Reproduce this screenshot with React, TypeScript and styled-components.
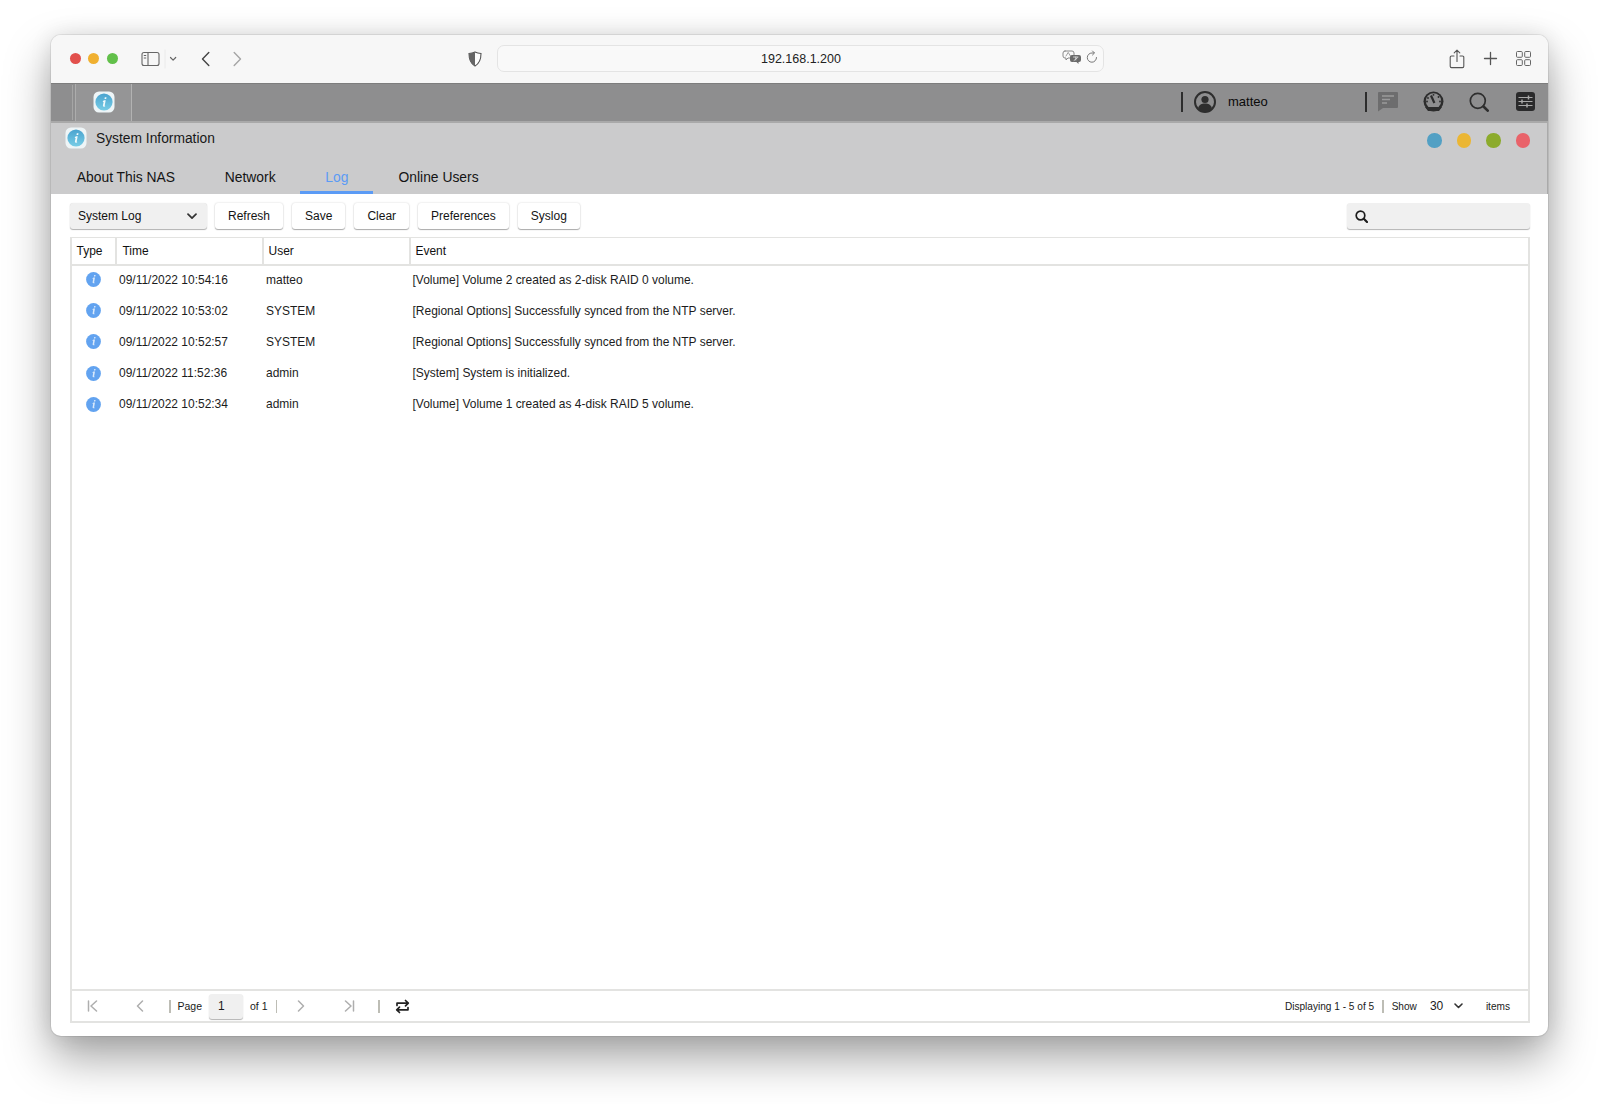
import React from "react";
import styled, { createGlobalStyle } from "styled-components";

const Global = createGlobalStyle`
  html, body { margin: 0; padding: 0; background: #fff; }
  body { font-family: "Liberation Sans", Arial, sans-serif; color: #111; }
`;
const Page = styled.div`
  width: 1600px; height: 1104px; padding: 35px 52px 68px 51px; box-sizing: border-box; overflow: hidden; background: #fff;
`;
const Win = styled.div`
  width: 100%; height: 100%; background: #fff; border-radius: 10px; display: flex; flex-direction: column; overflow: hidden;
  box-shadow: 0 0 0 1px rgba(0,0,0,.07), 0 22px 46px rgba(0,0,0,.36), 0 0 22px rgba(0,0,0,.1);
`;
const Safari = styled.div`
  height: 47px; flex: none; background: #f7f7f7; display: grid; grid-template-columns: 426.5px 607px 1fr; align-items: center; padding: 0 17px 1px 19px; border-bottom: 1px solid #7d7d7d;
`;
const SafariLeft = styled.div`display: flex; align-items: center;`;
const Lights = styled.div`display: flex; align-items: center; gap: 7.4px; margin-right: 23px;`;
const Light = styled.span`width: 11px; height: 11px; border-radius: 50%; background: ${p => p.$c};`;
const Nav = styled.div`display: flex; align-items: center; gap: 23px; margin-left: 22px;`;
const ShieldWrap = styled.div`display: flex; margin-left: auto; margin-right: 15px;`;
const UrlBar = styled.div`
  height: 24px; border: 1px solid #e4e4e4; border-radius: 7px; background: #f9f9f9; display: flex; align-items: center; justify-content: center; position: relative; font-size: 12.5px; color: #222; padding: 1px 0 0 2px;
`;
const UrlIcons = styled.div`position: absolute; right: 4px; top: 3px; display: flex; align-items: center; gap: 3px;`;
const SafariRight = styled.div`display: flex; align-items: center; justify-content: flex-end; gap: 18px;`;
const Tool = styled.span`display: flex;`;

const NasBar = styled.div`
  height: 39px; flex: none; background: #8e8e8f; display: flex; align-items: stretch; border-bottom: 2px solid #a9a9a9; box-sizing: border-box;
`;
const TaskTab = styled.div`
  width: 55px; margin-left: 24px; border-left: 1px solid #acacac; border-right: 1px solid #b2b2b2; background: #959596; box-shadow: -3px 0 0 -1px #8e8e8f, -4px 0 0 -1px #a5a5a5; display: flex; align-items: center; justify-content: center; padding-bottom: 2px;
`;
const NasUser = styled.div`margin-left: auto; display: flex; align-items: center; padding-bottom: 2px;`;
const Sep = styled.span`width: 2px; height: 20px; background: #2d2d2d;`;
const UserName = styled.span`font-size: 13px; color: #0a0a0a; width: 137px; margin-left: 12px;`;
const NasIcons = styled.div`display: flex; align-items: center; gap: 26px; margin-left: 11px; margin-right: 13px;`;

const Head = styled.div`background: #cbcbcc; height: 71px; flex: none; display: flex; flex-direction: column; border-right: 1px solid #aaa;`;
const TitleRow = styled.div`height: 33px; flex: none; display: flex; align-items: center; padding: 0 17px 3px 14px; box-sizing: border-box;`;
const Title = styled.span`font-size: 13.8px; margin-left: 9px; color: #181818;`;
const Dots = styled.div`margin-left: auto; display: flex; gap: 15px; margin-top: 5px;`;
const Dot = styled.span`width: 14.5px; height: 14.5px; border-radius: 50%; background: ${p => p.$c};`;
const Tabs = styled.div`display: flex; flex: 1; padding-left: 1px; margin-top: 6px;`;
const TabItem = styled.div<{ $active?: boolean; $ml?: number }>`
  padding: 0 24.85px; font-size: 13.85px; display: flex; align-items: center; margin-left: ${p => p.$ml ?? 0}px; color: ${p => p.$active ? "#5b9bf5" : "#141414"}; border-bottom: 3px solid ${p => p.$active ? "#5b9bf5" : "transparent"};
`;

const Content = styled.div`flex: 1; display: flex; flex-direction: column; padding: 9px 18px 13px 19px; min-height: 0;`;
const Toolbar = styled.div`height: 26px; flex: none; display: flex; gap: 7px; margin-bottom: 8px;`;
const Select = styled.div`
  width: 137px; background: #f0f0f0; border-radius: 3px; box-shadow: 0 1px 1px rgba(0,0,0,.3), 0 0 1px rgba(0,0,0,.12); font-size: 12px; display: flex; align-items: center; justify-content: space-between; padding: 0 10px 0 8px; box-sizing: border-box;
`;
const Btn = styled.div`
  background: #fff; padding: 0 13px; border-radius: 3px; box-shadow: 0 1px 1px rgba(0,0,0,.3), 0 0 2px rgba(0,0,0,.18); font-size: 12px; display: flex; align-items: center; color: #141414; margin-left: ${p => p.$ml ?? 0}px;
`;
const Search = styled.div`
  margin-left: auto; width: 183px; background: #f0f0f0; border-radius: 3px; box-shadow: 0 1px 1px rgba(0,0,0,.3); display: flex; align-items: center; padding-left: 8px; box-sizing: border-box;
`;
const Panel = styled.div`flex: 1; border: 2px solid #e3e3e1; border-width: 1.5px 2px 2px; display: flex; flex-direction: column; min-height: 0;`;
const Row = styled.div`
  display: grid; grid-template-columns: 43px 147px 147px 1fr; align-items: center; font-size: 11.97px; color: #1c1c1c;
`;
const HeaderRow = styled(Row)`height: 26px; flex: none; border-bottom: 2px solid #e3e3e1; box-sizing: content-box;`;
const HeadCell = styled.div`height: 100%; display: flex; align-items: center; padding-left: ${p => p.$pl ?? 4.5}px; border-left: ${p => p.$first ? "none" : "2px solid #e3e3e1"}; box-sizing: border-box; color: #111;`;
const Rows = styled.div`flex: 1; min-height: 0;`;
const DataRow = styled(Row)`height: 31.2px; padding-bottom: 4px; box-sizing: border-box;`;
const TypeCell = styled.div`display: flex; justify-content: center; padding-right: 1px;`;
const Cell = styled.div`padding-left: 3px; white-space: nowrap; margin-left: ${p => p.$ml ?? 0}px;`;
const Footer = styled.div`height: 30px; flex: none; border-top: 2px solid #e3e3e1; display: flex; align-items: center; font-size: 10.5px; color: #1a1a1a;`;
const PagerBtn = styled.span`display: flex; width: ${p => p.$w}px; justify-content: center;`;
const Bar = styled.span`width: 1.5px; height: 13px; background: #bdbdb5; margin-left: ${p => p.$ml ?? 0}px; margin-right: ${p => p.$mr ?? 0}px;`;
const Label = styled.span`margin-left: ${p => p.$ml ?? 0}px; white-space: nowrap;`;
const PageInput = styled.div`
  width: 34px; height: 25px; background: #f0f0f0; border-radius: 3px; box-shadow: 0 1px 1px rgba(0,0,0,.3); margin-left: 7px; margin-right: 7px; font-size: 12px; display: flex; align-items: center; padding-left: 9px; box-sizing: border-box;
`;
const FootRight = styled.div`margin-left: auto; display: flex; align-items: center; margin-right: 18px; font-size: 10.1px;`;
const Count = styled.span`font-size: 12px; margin-left: 13px; width: 33px; display: flex; align-items: center; justify-content: space-between;`;

const InfoApp = ({ size = 22 }: { size?: number }) => (
  <svg width={size} height={size} viewBox="0 0 22 22">
    <defs>
      <linearGradient id="ia" x1="0" y1="0" x2="0" y2="1"><stop offset="0" stopColor="#4aa3cf" /><stop offset="1" stopColor="#78cde6" /></linearGradient>
    </defs>
    <rect x="0.5" y="0.5" width="21" height="21" rx="5.5" fill="#eef5f7" />
    <circle cx="11" cy="11" r="8.6" fill="url(#ia)" />
    <path d="M11.8 6.2h1.7l-.3 1.7h-1.7zM10.9 9.2h1.8l-1 5.2q-.1.6.5.4l-.1.8q-2.4.6-2.2-1.1l.7-3.6-.8.1.1-.7z" fill="#f2fafc" />
  </svg>
);
const InfoRow = () => (
  <svg width="15" height="15" viewBox="0 0 15 15">
    <circle cx="7.5" cy="7.5" r="7.4" fill="#62a3f0" />
    <path d="M8.2 3h1.4l-.3 1.4H7.9zM7.5 5.6h1.5l-.9 4.6q-.1.5.5.3l-.1.7q-2.1.5-1.9-1l.6-3.4-.7.1.1-.6z" fill="#d9e9fb" />
  </svg>
);
const S = { fill: "none", strokeLinecap: "round" as const, strokeLinejoin: "round" as const };

const rows = [
  ["09/11/2022 10:54:16", "matteo", "[Volume] Volume 2 created as 2-disk RAID 0 volume."],
  ["09/11/2022 10:53:02", "SYSTEM", "[Regional Options] Successfully synced from the NTP server."],
  ["09/11/2022 10:52:57", "SYSTEM", "[Regional Options] Successfully synced from the NTP server."],
  ["09/11/2022 11:52:36", "admin", "[System] System is initialized."],
  ["09/11/2022 10:52:34", "admin", "[Volume] Volume 1 created as 4-disk RAID 5 volume."],
];

export default function App() {
  return (
    <Page>
      <Global />
      <Win>
        <Safari>
          <SafariLeft>
            <Lights>
              <Light $c="#e2504c" /><Light $c="#f0b030" /><Light $c="#62c04a" />
            </Lights>
            <svg width="38" height="20" viewBox="0 0 38 20" {...S} stroke="#666">
              <rect x="1" y="3.5" width="17" height="13" rx="2" strokeWidth="1.1" />
              <path d="M7 3.5v13" strokeWidth="1.1" /><path d="M3.2 6.5h1.6M3.2 9h1.6" strokeWidth="1" />
              <path d="M24 1v18" stroke="#eaeaea" strokeWidth="1" />
              <path d="M29.5 8.500l2.600 2.600 2.600-2.600" strokeWidth="1.2" />
            </svg>
            <Nav>
              <svg width="9" height="16" viewBox="0 0 9 16" {...S} stroke="#444"><path d="M7.800 1.500L1.500 8l6.300 6.500" strokeWidth="1.4" /></svg>
              <svg width="9" height="16" viewBox="0 0 9 16" {...S} stroke="#a5a5a5"><path d="M1.200 1.500L7.500 8l-6.300 6.500" strokeWidth="1.4" /></svg>
            </Nav>
            <ShieldWrap>
              <svg width="14" height="16" viewBox="0 0 14 16">
                <path d="M7 1c2 1 4 1.400 6 1.500 0 5.800-1.500 10-6 12.500C2.500 12.500 1 8.300 1 2.500 3 2.400 5 2 7 1z" fill="#fff" stroke="#555" strokeWidth="1.100" />
                <path d="M7 1v14C2.500 12.500 1 8.300 1 2.500 3 2.400 5 2 7 1z" fill="#666" />
              </svg>
            </ShieldWrap>
          </SafariLeft>
          <UrlBar>
            192.168.1.200
            <UrlIcons>
              <svg width="20" height="16" viewBox="0 0 20 16" {...S} stroke="#888">
                <path d="M3 2h7a2 2 0 0 1 2 2v3a2 2 0 0 1-2 2H6l-2 2V9H3a2 2 0 0 1-2-2V4a2 2 0 0 1 2-2z" strokeWidth="1" />
                <path d="M4 7l2.200-3.600L8.400 7" strokeWidth=".8" />
                <path d="M10 6h7a2 2 0 0 1 2 2v3a2 2 0 0 1-2 2h-.5v2l-2-2H10a2 2 0 0 1-2-2V8a2 2 0 0 1 2-2z" fill="#6a6a6a" stroke="none" />
                <path d="M11.500 8h4.500M13.800 8v3M12 11.500l3.500-2.800" stroke="#e4e4e4" strokeWidth=".8" />
              </svg>
              <svg width="14" height="16" viewBox="0 0 14 16" {...S} stroke="#777"><path d="M11.500 8.500A4.600 4.600 0 1 1 7 4h2M7.500 2l2 2-2 2" strokeWidth="1" /></svg>
            </UrlIcons>
          </UrlBar>
          <SafariRight>
            <Tool>
              <svg width="16" height="20" viewBox="0 0 16 20" {...S} stroke="#555"><path d="M5 7H2.500a1.300 1.300 0 0 0-1.300 1.300v9a1.300 1.300 0 0 0 1.300 1.300h11a1.300 1.300 0 0 0 1.300-1.300v-9A1.300 1.300 0 0 0 13.500 7H11M8 12.500V1.200M5.200 3.800L8 1.100l2.800 2.700" strokeWidth="1.100" /></svg>
            </Tool>
            <Tool>
              <svg width="15" height="15" viewBox="0 0 15 15" {...S} stroke="#555"><path d="M7.500 1.500v12M1.500 7.500h12" strokeWidth="1.300" /></svg>
            </Tool>
            <Tool>
              <svg width="15" height="15" viewBox="0 0 15 15" fill="none" stroke="#666" strokeWidth="1"><rect x=".5" y=".5" width="5.800" height="5.800" rx="1" /><rect x="8.700" y=".5" width="5.800" height="5.800" rx="1" /><rect x=".5" y="8.700" width="5.800" height="5.800" rx="1" /><rect x="8.700" y="8.700" width="5.800" height="5.800" rx="1" /></svg>
            </Tool>
          </SafariRight>
        </Safari>

        <NasBar>
          <TaskTab><InfoApp /></TaskTab>
          <NasUser>
            <Sep />
            <svg width="22" height="22" viewBox="0 0 22 22" style={{ marginLeft: 11 }}>
              <circle cx="11" cy="11" r="10" fill="#8e8e8f" stroke="#2e2e2e" strokeWidth="2" />
              <circle cx="11" cy="8.500" r="3.600" fill="#2e2e2e" />
              <path d="M4 17.200c1-3.400 3.600-4.600 7-4.600s6 1.200 7 4.600A10 10 0 0 1 11 21a10 10 0 0 1-7-3.800z" fill="#2e2e2e" />
            </svg>
            <UserName>matteo</UserName>
            <Sep />
            <NasIcons>
              <svg width="21" height="21" viewBox="0 0 21 21" style={{ marginLeft: -1, marginRight: -1 }}>
                <path d="M2 1h18a1 1 0 0 1 1 1v14a1 1 0 0 1-1 1H6l-5 3.500V2a1 1 0 0 1 1-1z" fill="#6d6d6e" />
                <path d="M5 5h12M5 8.500h8M5 12h5" stroke="#9a9a9b" strokeWidth="1.500" />
              </svg>
              <svg width="21" height="21" viewBox="0 0 21 21">
                <circle cx="10.500" cy="10.500" r="10" fill="#2c2c2c" />
                <circle cx="10.500" cy="10" r="7.700" fill="#8e8e8f" />
                <path d="M2 16h17l-3 4H5z" fill="#2c2c2c" />
                <path d="M8 4.500l3.400 7.500" stroke="#2c2c2c" strokeWidth="2.200" />
                <circle cx="10.500" cy="3.800" r=".9" fill="#2c2c2c" /><circle cx="15.500" cy="6" r=".9" fill="#2c2c2c" /><circle cx="5" cy="7" r=".9" fill="#2c2c2c" /><circle cx="17" cy="10.500" r=".9" fill="#2c2c2c" /><circle cx="4" cy="10.500" r=".9" fill="#2c2c2c" />
              </svg>
              <svg width="20" height="20" viewBox="0 0 20 20" {...S} stroke="#2e2e2e" style={{ marginLeft: -1, marginRight: 1 }}><circle cx="8.800" cy="8.800" r="7.500" strokeWidth="1.700" /><path d="M14.500 14.500l4.200 4.200" strokeWidth="2.600" /></svg>
              <svg width="19" height="19" viewBox="0 0 19 19">
                <rect width="19" height="19" rx="3" fill="#2a2a2b" />
                <path d="M2.500 5.500h14M2.500 9.500h14M2.500 13.500h14" stroke="#a8a8a8" strokeWidth="1.200" />
                <path d="M12.500 3.500v4M6 7.500v4M11 11.500v4" stroke="#a8a8a8" strokeWidth="1.500" />
              </svg>
            </NasIcons>
          </NasUser>
        </NasBar>

        <Head>
          <TitleRow>
            <InfoApp />
            <Title>System Information</Title>
            <Dots>
              <Dot $c="#52a0c4" /><Dot $c="#ebb634" /><Dot $c="#8cab2c" /><Dot $c="#e9636a" />
            </Dots>
          </TitleRow>
          <Tabs>
            <TabItem>About This NAS</TabItem>
            <TabItem>Network</TabItem>
            <TabItem $active>Log</TabItem>
            <TabItem $ml={0.5}>Online Users</TabItem>
          </Tabs>
        </Head>

        <Content>
          <Toolbar>
            <Select>
              System Log
              <svg width="10" height="7" viewBox="0 0 10 7" {...S} stroke="#333"><path d="M1 1.200l4 4 4-4" strokeWidth="1.700" /></svg>
            </Select>
            <Btn $ml={1}>Refresh</Btn>
            <Btn $ml={2}>Save</Btn>
            <Btn $ml={2}>Clear</Btn>
            <Btn $ml={2}>Preferences</Btn>
            <Btn $ml={2}>Syslog</Btn>
            <Search>
              <svg width="13" height="13" viewBox="0 0 13 13" {...S} stroke="#1c1c1c"><circle cx="5.500" cy="5.500" r="4.300" strokeWidth="1.700" /><path d="M8.800 8.800l3.200 3.200" strokeWidth="2.200" /></svg>
            </Search>
          </Toolbar>
          <Panel>
            <HeaderRow>
              <HeadCell $first>Type</HeadCell>
              <HeadCell $pl={5.5}>Time</HeadCell>
              <HeadCell>User</HeadCell>
              <HeadCell>Event</HeadCell>
            </HeaderRow>
            <Rows>
              {rows.map((r, i) => (
                <DataRow key={i}>
                  <TypeCell><InfoRow /></TypeCell>
                  <Cell $ml={1}>{r[0]}</Cell>
                  <Cell $ml={1}>{r[1]}</Cell>
                  <Cell $ml={0.5}>{r[2]}</Cell>
                </DataRow>
              ))}
            </Rows>
            <Footer>
              <PagerBtn $w={40}><svg width="11" height="12" viewBox="0 0 11 12" {...S} stroke="#aeaeae"><path d="M1.500 1v10M9.500 1L4 6l5.500 5" strokeWidth="1.500" /></svg></PagerBtn>
              <PagerBtn $w={56}><svg width="8" height="12" viewBox="0 0 8 12" {...S} stroke="#aeaeae"><path d="M6.500 1L1.500 6l5 5" strokeWidth="1.500" /></svg></PagerBtn>
              <Bar $ml={1} />
              <Label $ml={7}>Page</Label>
              <PageInput>1</PageInput>
              <Label>of 1</Label>
              <Bar $ml={8} />
              <PagerBtn $w={47}><svg width="8" height="12" viewBox="0 0 8 12" {...S} stroke="#aeaeae"><path d="M1.500 1l5 5-5 5" strokeWidth="1.500" /></svg></PagerBtn>
              <PagerBtn $w={50}><svg width="11" height="12" viewBox="0 0 11 12" {...S} stroke="#aeaeae"><path d="M9.500 1v10M1.500 1L7 6l-5.500 5" strokeWidth="1.500" /></svg></PagerBtn>
              <Bar $ml={4} $mr={15} />
              <svg width="15" height="15" viewBox="0 0 15 15" {...S} stroke="#222">
                <path d="M2 6.500V4.200h11M10.500 1.500l2.800 2.700-2.800 2.700M13 8.500v2.300H2M4.500 13.500L1.700 10.800l2.800-2.700" strokeWidth="1.700" />
              </svg>
              <FootRight>
                <Label>Displaying 1 - 5 of 5</Label>
                <Bar $ml={8} $mr={8} />
                <Label>Show</Label>
                <Count>
                  30
                  <svg width="9" height="6" viewBox="0 0 9 6" {...S} stroke="#333"><path d="M1 1l3.500 3.500L8 1" strokeWidth="1.600" /></svg>
                </Count>
                <Label $ml={23}>items</Label>
              </FootRight>
            </Footer>
          </Panel>
        </Content>
      </Win>
    </Page>
  );
}
